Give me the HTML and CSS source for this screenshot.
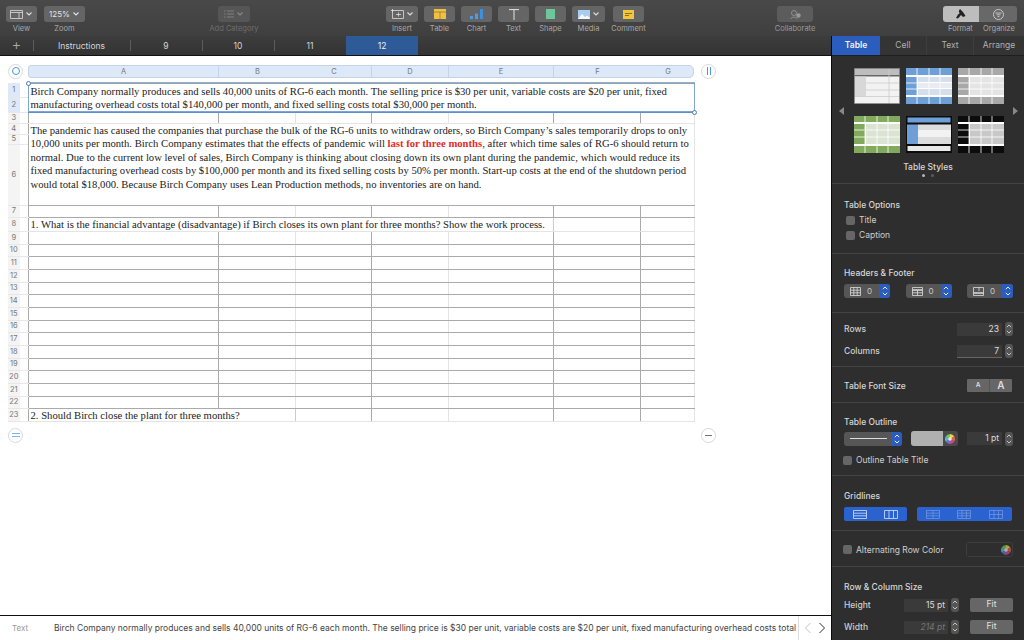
FILE: index.html
```html
<!DOCTYPE html>
<html lang="en">
<head>
    <meta charset="UTF-8">
    <title>Numbers</title>
    <link rel="stylesheet" href="styles.css">
</head>
<body>
<svg class="defs" width="0" height="0">
    <symbol id="chev" viewBox="0 0 8 8"><path d="M1.5 2.5 4 5l2.5-2.5" fill="none" stroke="currentColor" stroke-width="1.1"/></symbol>
    <symbol id="updown" viewBox="0 0 8 14"><path d="M1.8 5.2 4 3l2.2 2.2M1.8 8.8 4 11l2.2-2.2" fill="none" stroke="currentColor" stroke-width="1"/></symbol>
    <symbol id="wheel" viewBox="0 0 10 10">
        <path d="M5 5V0a5 5 0 0 1 4.3 2.500z" fill="#e6d84c"/>
        <path d="M5 5 9.300 2.500a5 5 0 0 1 0 5z" fill="#e0623f"/>
        <path d="M5 5 9.300 7.500A5 5 0 0 1 5 10z" fill="#c9479a"/>
        <path d="M5 5v5A5 5 0 0 1 .7 7.500z" fill="#6a6fd8"/>
        <path d="M5 5 .7 7.500a5 5 0 0 1 0-5z" fill="#53b9d9"/>
        <path d="M5 5 .7 2.500A5 5 0 0 1 5 0z" fill="#73c95f"/>
        <circle cx="5" cy="5" r="1.800" fill="#e8e8e8"/>
    </symbol>
</svg>

<!-- toolbar -->
<header class="toolbar">
    <div class="tool w31">
        <div class="btn"><svg class="ic" width="13" height="9" viewBox="0 0 13 9"><path d="M.5.5h12v8H.5zM.5 2.500h12M9 2.500v6" fill="none" stroke="#ddd" stroke-width=".8"/></svg><svg class="chev"><use href="#chev"/></svg></div>
        <span>View</span>
    </div>
    <div class="tool w41 ml7">
        <div class="btn zoomtxt">125%<svg class="chev"><use href="#chev"/></svg></div>
        <span>Zoom</span>
    </div>
    <div class="tool w32 ml133 off">
        <div class="btn"><svg class="ic" width="10" height="8" viewBox="0 0 10 8"><path d="M0 1h1.500M3 1h7M0 4h1.500M3 4h7M0 7h1.500M3 7h7" stroke="#8a8a8a" stroke-width=".8"/></svg><svg class="chev"><use href="#chev"/></svg></div>
        <span>Add Category</span>
    </div>
    <div class="tool w32 ml136">
        <div class="btn"><svg class="ic" width="13" height="10" viewBox="0 0 13 10"><path d="M1.500 1.500h11v8h-11zM5 5.500h5M7.500 3.500v4M1.500 0v3M0 1.500h3" fill="none" stroke="#ddd" stroke-width=".8"/></svg><svg class="chev"><use href="#chev"/></svg></div>
        <span>Insert</span>
    </div>
    <div class="tool w31 ml6">
        <div class="btn"><svg width="12" height="10" viewBox="0 0 12 10"><rect width="12" height="10" fill="#f0c040"/><path d="M0 3h12M6 3v7" stroke="#7a6a30" stroke-width=".6"/></svg></div>
        <span>Table</span>
    </div>
    <div class="tool w31 ml6">
        <div class="btn"><svg width="13" height="10" viewBox="0 0 13 10"><path d="M0 7h3v3H0zM5 4.500h3V10H5z" fill="#4d9be0"/><path d="M10 0h3v10h-3z" fill="#3f8fe0"/></svg></div>
        <span>Chart</span>
    </div>
    <div class="tool w31 ml6">
        <div class="btn"><svg width="10" height="11" viewBox="0 0 10 11"><path d="M0 .6h10M5 .6V11" stroke="#e4e4e4" stroke-width="1"/></svg></div>
        <span>Text</span>
    </div>
    <div class="tool w31 ml6">
        <div class="btn"><svg width="9" height="10" viewBox="0 0 9 10"><rect width="9" height="10" fill="#6cc79a"/></svg></div>
        <span>Shape</span>
    </div>
    <div class="tool w33 ml6">
        <div class="btn"><svg class="ic" width="12" height="9" viewBox="0 0 12 9"><rect width="12" height="9" fill="#a9cdf2"/><path d="M0 9 4 4l3 3 2-1.500L12 8v1z" fill="#f4f8fc"/></svg><svg class="chev"><use href="#chev"/></svg></div>
        <span>Media</span>
    </div>
    <div class="tool w31 ml8">
        <div class="btn"><svg width="11" height="9" viewBox="0 0 11 9"><rect width="11" height="9" fill="#f2c63a"/><path d="M2 3.500h7M2 5.500h4" stroke="#6e5a1c" stroke-width=".8"/></svg></div>
        <span>Comment</span>
    </div>
    <div class="tool w36 ml133 dim">
        <div class="btn"><svg width="11" height="9" viewBox="0 0 11 9"><circle cx="4" cy="3" r="2.500" fill="none" stroke="#999" stroke-width=".8"/><path d="M.8 9c.4-2.500 5.800-2.500 6.400 0" fill="none" stroke="#999" stroke-width=".8"/><circle cx="8.500" cy="5.500" r="2.200" fill="#999"/></svg></div>
        <span>Collaborate</span>
    </div>
    <div class="tool-seg">
        <div class="seg">
            <div class="seg-on"><svg width="10" height="10" viewBox="0 0 10 10"><path d="M4 0 7 3 9.500 7 7 8 5 6 2 9.500 0 9l2-3.500L3.500 4.500 2.800 2z" fill="#222"/></svg></div>
            <div class="seg-off"><svg width="11" height="11" viewBox="0 0 11 11"><circle cx="5.500" cy="5.500" r="5" fill="none" stroke="#ddd" stroke-width=".8"/><path d="M2.500 4h6M3.500 5.800h4M4.500 7.600h2" stroke="#ddd" stroke-width=".8"/></svg></div>
        </div>
        <div class="seg-labels"><span>Format</span><span>Organize</span></div>
    </div>
</header>

<div class="main">
    <div class="workspace">
        <nav class="sheets">
            <div class="add">+</div>
            <div class="sheet first">Instructions</div>
            <div class="sheet">9</div>
            <div class="sheet">10</div>
            <div class="sheet last">11</div>
            <div class="sheet active">12</div>
        </nav>

        <div class="canvas">
            <div class="col-row">
                <div class="round-btn"><i class="ring"></i></div>
                <div class="col-heads">
                    <div class="col-a">A</div>
                    <div class="col-bc"><span>B</span><span>C</span></div>
                    <div class="col-d">D</div>
                    <div class="col-e">E</div>
                    <div class="col-fg"><span>F</span><span>G</span></div>
                </div>
                <div class="round-btn pause"><i></i><i></i></div>
            </div>

            <table class="sheet-table">
                <colgroup>
                    <col class="c-num"><col class="c-a"><col class="c-b"><col class="c-c"><col class="c-d"><col class="c-e"><col class="c-f"><col class="c-g">
                </colgroup>
                <tr class="h14"><th class="sel">1</th><td class="merged selected" colspan="7" rowspan="2">
                    Birch Company normally produces and sells 40,000 units of RG-6 each month. The selling price is $30 per unit, variable costs are $20 per unit, fixed<br>
                    manufacturing overhead costs total $140,000 per month, and fixed selling costs total $30,000 per month.
                    <i class="dot d-start"></i><i class="dot d-end"></i>
                </td></tr>
                <tr class="h15"><th class="sel">2</th></tr>
                <tr class="h11 light-bottom"><th>3</th><td></td><td class="lt"></td><td></td><td class="lt"></td><td></td><td></td><td class="noright"></td></tr>
                <tr class="h11"><th>4</th><td class="merged para" colspan="7" rowspan="3">
                    The pandemic has caused the companies that purchase the bulk of the RG-6 units to withdraw orders, so Birch Company’s sales temporarily drops to only<br>
                    10,000 units per month. Birch Company estimates that the effects of pandemic will <b>last for three months</b>, after which time sales of RG-6 should return to<br>
                    normal. Due to the current low level of sales, Birch Company is thinking about closing down its own plant during the pandemic, which would reduce its<br>
                    fixed manufacturing overhead costs by $100,000 per month and its fixed selling costs by 50% per month. Start-up costs at the end of the shutdown period<br>
                    would total $18,000. Because Birch Company uses Lean Production methods, no inventories are on hand.
                </td></tr>
                <tr class="h10"><th>5</th></tr>
                <tr class="h61"><th>6</th></tr>
                <tr class="h12"><th>7</th><td></td><td class="lt"></td><td></td><td class="lt"></td><td></td><td></td><td class="noright"></td></tr>
                <tr class="h14 light-bottom"><th>8</th><td class="merged q" colspan="5">1. What is the financial advantage (disadvantage) if Birch closes its own plant for three months? Show the work process.</td><td></td><td class="noright"></td></tr>
                <tr class="h13"><th>9</th><td></td><td class="lt"></td><td></td><td class="lt"></td><td></td><td></td><td class="noright"></td></tr>
                <tr class="h12"><th>10</th><td></td><td class="lt"></td><td></td><td class="lt"></td><td></td><td></td><td class="noright"></td></tr>
                <tr class="h13"><th>11</th><td></td><td class="lt"></td><td></td><td class="lt"></td><td></td><td></td><td class="noright"></td></tr>
                <tr class="h13"><th>12</th><td></td><td class="lt"></td><td></td><td class="lt"></td><td></td><td></td><td class="noright"></td></tr>
                <tr class="h12"><th>13</th><td></td><td class="lt"></td><td></td><td class="lt"></td><td></td><td></td><td class="noright"></td></tr>
                <tr class="h13"><th>14</th><td></td><td class="lt"></td><td></td><td class="lt"></td><td></td><td></td><td class="noright"></td></tr>
                <tr class="h13"><th>15</th><td></td><td class="lt"></td><td></td><td class="lt"></td><td></td><td></td><td class="noright"></td></tr>
                <tr class="h12"><th>16</th><td></td><td class="lt"></td><td></td><td class="lt"></td><td></td><td></td><td class="noright"></td></tr>
                <tr class="h13"><th>17</th><td></td><td class="lt"></td><td></td><td class="lt"></td><td></td><td></td><td class="noright"></td></tr>
                <tr class="h13"><th>18</th><td></td><td class="lt"></td><td></td><td class="lt"></td><td></td><td></td><td class="noright"></td></tr>
                <tr class="h12"><th>19</th><td></td><td class="lt"></td><td></td><td class="lt"></td><td></td><td></td><td class="noright"></td></tr>
                <tr class="h13"><th>20</th><td></td><td class="lt"></td><td></td><td class="lt"></td><td></td><td></td><td class="noright"></td></tr>
                <tr class="h13"><th>21</th><td></td><td class="lt"></td><td></td><td class="lt"></td><td></td><td></td><td class="noright"></td></tr>
                <tr class="h12"><th>22</th><td></td><td class="lt"></td><td></td><td class="lt"></td><td></td><td></td><td class="noright"></td></tr>
                <tr class="h13 light-bottom"><th>23</th><td class="merged q" colspan="2">2. Should Birch close the plant for three months?</td><td></td><td class="lt"></td><td></td><td></td><td class="noright"></td></tr>
            </table>

            <div class="add-row">
                <div class="round-btn eq"><i></i><i></i></div>
                <div class="round-btn minus"><i></i></div>
            </div>
        </div>

        <footer class="textbar">
            <span class="textbar-label">Text</span>
            <span class="textbar-value">Birch Company normally produces and sells 40,000 units of RG-6 each month. The selling price is $30 per unit, variable costs are $20 per unit, fixed manufacturing overhead costs total</span>
            <div class="textbar-nav">
                <svg width="8" height="12" viewBox="0 0 8 12"><path d="M6.500 1 1.500 6l5 5" fill="none" stroke="#c4c4c4"/></svg>
                <svg width="8" height="12" viewBox="0 0 8 12"><path d="M1.500 1l5 5-5 5" fill="none" stroke="#333"/></svg>
            </div>
        </footer>
    </div>

    <aside class="sidebar">
        <div class="side-tabs">
            <div class="side-tab active">Table</div>
            <div class="side-tab">Cell</div>
            <div class="side-tab">Text</div>
            <div class="side-tab">Arrange</div>
        </div>

        <section class="sec sec-styles">
            <div class="thumbs">
                <span class="arrow left"></span>
                <div class="thumb-grid">
                    <svg width="46" height="36" viewBox="0 0 46 36"><rect width="46" height="36" fill="#f2f2f2"/><rect width="46" height="7" fill="#bdbdbd"/><rect y="7" width="46" height="1.500" fill="#666"/><rect y="8.500" width="12" height="20" fill="#d8d8d8"/><path d="M12 15h34M12 22h34M35 0v36M0 28.500h46" stroke="#ccc" stroke-width=".8"/><rect x=".4" y=".4" width="45.200" height="35.200" fill="none" stroke="#777" stroke-width=".8"/></svg>
                    <svg width="46" height="36" viewBox="0 0 46 36"><rect width="46" height="36" fill="#fff"/><path d="M0 0h46v7H0zM0 29h46v7H0z" fill="#6e9fd6"/><path d="M0 9h11v18H0z" fill="#6e9fd6"/><path d="M12 9h34v5H12zM12 21h34v6H12z" fill="#d5dfec"/><path d="M12 15h34v5H12z" fill="#e8ecf2"/><path d="M11 0v36M23 0v36M34 0v36M0 8h46M0 15h12M0 21h12M0 28h46" stroke="#fff" stroke-width=".8"/></svg>
                    <svg width="46" height="36" viewBox="0 0 46 36"><rect width="46" height="36" fill="#fff"/><path d="M0 0h46v7H0zM0 29h46v7H0z" fill="#a8a8a8"/><path d="M0 9h11v18H0z" fill="#a8a8a8"/><path d="M12 9h34v18H12z" fill="#e4e4e4"/><path d="M11 0v36M23 0v36M34 0v36M0 8h46M0 15h46M0 21h46M0 28h46" stroke="#fff" stroke-width=".8"/></svg>
                    <svg width="46" height="37" viewBox="0 0 46 37"><rect width="46" height="37" fill="#fff"/><path d="M0 0h46v6H0zM0 30h46v7H0z" fill="#82aa5c"/><path d="M0 8h11v20H0z" fill="#82aa5c"/><path d="M12 8h34v20H12z" fill="#dbe3d2"/><path d="M11 0v37M23 0v37M34 0v37M0 7h46M0 14h46M0 21h46M0 29h46" stroke="#fff" stroke-width=".8"/></svg>
                    <svg width="46" height="37" viewBox="0 0 46 37"><rect width="46" height="37" fill="#0c0c0c"/><rect x="1.500" y="1.500" width="43" height="5" fill="#6e9fd6"/><path d="M1 8.500h11V28H1z" fill="#6e9fd6"/><path d="M12 8.500h33V14H12zM12 21h33v7H12z" fill="#dcdcdc"/><path d="M12 14h33v7H12z" fill="#f2f2f2"/><rect x="1.500" y="30" width="43" height="5" fill="#e8e8e8"/></svg>
                    <svg width="46" height="37" viewBox="0 0 46 37"><rect width="46" height="37" fill="#fff"/><path d="M0 0h46v6H0zM0 30h46v7H0z" fill="#0c0c0c"/><path d="M0 8h11v20H0z" fill="#0c0c0c"/><path d="M12 8h34v20H12z" fill="#c8c8c8"/><path d="M11 0v37M23 0v37M34 0v37M0 7h46M0 14h46M0 21h46M0 29h46" stroke="#fff" stroke-width=".8"/></svg>
                </div>
                <span class="arrow right"></span>
            </div>
            <div class="styles-title">Table Styles</div>
            <div class="page-dots"><i class="on"></i><i></i></div>
        </section>

        <section class="sec sec-options">
            <h3>Table Options</h3>
            <label class="check ind"><i class="box"></i>Title</label>
            <label class="check ind"><i class="box"></i>Caption</label>
        </section>

        <section class="sec sec-headers">
            <h3>Headers &amp; Footer</h3>
            <div class="row">
                <div class="hf">
                    <svg width="11" height="9" viewBox="0 0 11 9"><path d="M.5.5h10v8H.5zM.5 3.200h10M.5 5.800h10M3.800.5v8M7.200.5v8" fill="none" stroke="#ddd" stroke-width=".8"/></svg>
                    <span>0</span><b><svg><use href="#updown"/></svg></b>
                </div>
                <div class="hf">
                    <svg width="11" height="9" viewBox="0 0 11 9"><path d="M.5.5h10v8H.5z" fill="none" stroke="#ddd" stroke-width=".8"/><path d="M.5 3h10" stroke="#ddd" stroke-width="1.400"/><path d="M.5 5.800h10M5.500 3v5.500" stroke="#ddd" stroke-width=".8"/></svg>
                    <span>0</span><b><svg><use href="#updown"/></svg></b>
                </div>
                <div class="hf">
                    <svg width="11" height="9" viewBox="0 0 11 9"><path d="M.5.5h10v8H.5z" fill="none" stroke="#ddd" stroke-width=".8"/><path d="M.5 6h10" stroke="#ddd" stroke-width="1.400"/><path d="M6 .5V4" stroke="#ddd" stroke-width=".8"/></svg>
                    <span>0</span><b><svg><use href="#updown"/></svg></b>
                </div>
            </div>
        </section>

        <section class="sec sec-rows">
            <div class="row field"><span>Rows</span><div class="num-wrap"><div class="num">23</div><div class="stepper"><svg><use href="#updown"/></svg></div></div></div>
            <div class="row field gap8"><span>Columns</span><div class="num-wrap"><div class="num underline">7</div><div class="stepper"><svg><use href="#updown"/></svg></div></div></div>
        </section>

        <section class="sec sec-font">
            <div class="row"><h3>Table Font Size</h3>
                <div class="font-btns"><span class="small">A</span><span class="big">A</span></div>
            </div>
        </section>

        <section class="sec sec-outline">
            <h3>Table Outline</h3>
            <div class="row outline-row">
                <div class="line-pick"><i></i><b><svg><use href="#updown"/></svg></b></div>
                <div class="color-pick"><i class="swatch"></i><svg class="wheel"><use href="#wheel"/></svg></div>
                <div class="num-wrap"><div class="num short">1 pt</div><div class="stepper"><svg><use href="#updown"/></svg></div></div>
            </div>
            <label class="check"><i class="box"></i>Outline Table Title</label>
        </section>

        <section class="sec sec-grid">
            <h3>Gridlines</h3>
            <div class="row grid-row">
                <div class="grid-btns first">
                    <svg width="14" height="9" viewBox="0 0 14 9"><path d="M.5.5h13v8H.5zM.5 3.200h13M.5 5.800h13" fill="none" stroke="#d5e2fa" stroke-width=".8"/></svg>
                    <svg width="14" height="9" viewBox="0 0 14 9"><path d="M.5.5h13v8H.5zM5 .5v8M9.500.5v8" fill="none" stroke="#d5e2fa" stroke-width=".8"/></svg>
                </div>
                <div class="grid-btns second">
                    <svg width="14" height="9" viewBox="0 0 14 9"><path d="M.5.5h13v8H.5zM.5 3.200h13M.5 5.800h13M7 .5v8" fill="none" stroke="#6f95dd" stroke-width=".8"/></svg>
                    <svg width="14" height="9" viewBox="0 0 14 9"><path d="M.5.5h13v8H.5zM.5 3.200h13M.5 5.800h13M5 .5v8M9.500.5v8" fill="none" stroke="#6f95dd" stroke-width=".8"/></svg>
                    <svg width="14" height="9" viewBox="0 0 14 9"><path d="M.5.5h13v8H.5zM.5 4.500h13M5 .5v8M9.500.5v8" fill="none" stroke="#6f95dd" stroke-width=".8"/></svg>
                </div>
            </div>
        </section>

        <section class="sec sec-alt">
            <div class="row">
                <label class="check"><i class="box"></i>Alternating Row Color</label>
                <div class="color-pick off"><i class="swatch"></i><svg class="wheel"><use href="#wheel"/></svg></div>
            </div>
        </section>

        <section class="sec sec-size">
            <h3>Row &amp; Column Size</h3>
            <div class="row field size-row"><span>Height</span>
                <div class="size-ctl"><div class="num mid">15 pt</div><div class="stepper"><svg><use href="#updown"/></svg></div><div class="fit">Fit</div></div>
            </div>
            <div class="row field size-row"><span>Width</span>
                <div class="size-ctl"><div class="num mid faded">214 pt</div><div class="stepper"><svg><use href="#updown"/></svg></div><div class="fit">Fit</div></div>
            </div>
        </section>
    </aside>
</div>
</body>
</html>
```

FILE: styles.css
```css
/* -------- Page -------- */
* { box-sizing: border-box; }
html, body { margin: 0; height: 100%; }
body {
    width: 1024px;
    height: 640px;
    overflow: hidden;
    display: flex;
    flex-direction: column;
    font-family: Inter, "Noto Sans", sans-serif;
    background: #fff;
}
.defs { position: absolute; }
h3 { margin: 0; font-size: 8.5px; line-height: 12px; font-weight: 500; color: #d6d6d6; }

/* -------- Toolbar -------- */
.toolbar {
    height: 36px;
    flex: none;
    display: flex;
    padding: 6px 0 0 6px;
    background: linear-gradient(#494949, #3f3f3f);
}
.tool { display: flex; flex-direction: column; align-items: center; }
.tool > span, .seg-labels span {
    margin-top: 2px;
    font-size: 7.5px;
    line-height: 10px;
    color: #a8a8a8;
    white-space: nowrap;
}
.btn {
    width: 100%;
    height: 16px;
    display: flex;
    align-items: center;
    justify-content: center;
    gap: 2px;
    border-radius: 3px;
    background: #656565;
    color: #ddd;
}
.chev { width: 8px; height: 8px; }
.zoomtxt { font-size: 8px; color: #e2e2e2; }
.off .btn { background: #565656; color: #8a8a8a; }
.off > span { color: #6e6e6e; }
.dim .btn { background: #5c5c5c; }
.dim > span { color: #999; }
.w31 { width: 31px; }
.w32 { width: 32px; }
.w33 { width: 33px; }
.w36 { width: 36px; }
.w41 { width: 41px; }
.ml6 { margin-left: 6px; }
.ml7 { margin-left: 7px; }
.ml8 { margin-left: 8px; }
.ml133 { margin-left: 133px; }
.ml136 { margin-left: 136px; }
.tool-seg { width: 74px; margin-left: 130px; }
.seg { height: 16px; display: flex; border-radius: 3px; overflow: hidden; }
.seg-on, .seg-off { display: flex; align-items: center; justify-content: center; }
.seg-on { width: 36px; background: #bdbdbd; }
.seg-off { width: 38px; background: #686868; }
.seg-labels { display: flex; justify-content: space-between; padding: 0 2px 0 5px; }

/* -------- Sheet tabs -------- */
.main { flex: 1; display: flex; min-height: 0; }
.workspace { width: 831px; display: flex; flex-direction: column; }
.sheets {
    height: 20px;
    display: flex;
    align-items: stretch;
    background: linear-gradient(#3d3d3d, #333);
    border-bottom: 1px solid #111;
    font-size: 8.500px;
    color: #d4d4d4;
}
.add { width: 33px; text-align: center; font-size: 15px; font-weight: 300; line-height: 18px; color: #aaa; }
.sheet { width: 72px; display: flex; align-items: center; justify-content: center; position: relative; }
.sheet.first { width: 97px; }
.sheet::before { content: ""; position: absolute; left: 0; top: 4px; height: 11px; width: 1px; background: #5c5c5c; }
.sheet.active { background: #2f5a98; color: #eaf0f8; }
.sheet.active::before { display: none; }

/* -------- Canvas and table -------- */
.canvas { flex: 1; padding: 6px 0 0 8px; background: #fff; }
.col-row { height: 18px; display: flex; align-items: center; }
.round-btn {
    width: 15px;
    height: 15px;
    flex: none;
    display: flex;
    align-items: center;
    justify-content: center;
    gap: 2px;
    border: 1px solid #d8d8d8;
    border-radius: 50%;
    background: #fff;
}
.ring { width: 8px; height: 8px; border: 1px solid #4b93e6; border-radius: 50%; }
.pause { margin-left: 7px; }
.pause i { width: 1px; height: 8px; background: #4b93e6; }
.col-heads {
    width: 666px;
    height: 13px;
    margin-left: 5px;
    display: grid;
    grid-template-columns: 190px 153px 77px 105px 141px;
    background: #dde9f9;
    border: 1px solid #c5d3e6;
    border-radius: 3px 5px 5px 3px;
    font-size: 7.500px;
    line-height: 11px;
    color: #777;
    text-align: center;
}
.col-heads > div { border-right: 1px solid #c5d3e6; }
.col-heads > div:last-child { border-right: 0; }
.col-bc { display: grid; grid-template-columns: 77px 76px; }
.col-fg { display: grid; grid-template-columns: 87px 54px; }

.sheet-table {
    margin-top: 2px;
    table-layout: fixed;
    width: 687px;
    border-collapse: collapse;
    font-family: "Liberation Serif", serif;
    font-size: 10.670px;
    color: #222;
}
.c-num { width: 20px; }
.c-a { width: 190px; }
.c-b { width: 77px; }
.c-c { width: 76px; }
.c-d { width: 77px; }
.c-e { width: 105px; }
.c-f { width: 87px; }
.c-g { width: 54px; }
.h10 { height: 10px; }
.h11 { height: 11px; }
.h12 { height: 12px; }
.h13 { height: 13px; }
.h14 { height: 14px; }
.h15 { height: 15px; }
.h61 { height: 61px; }
.sheet-table th {
    padding: 0 8px 0 0;
    font-family: Inter, sans-serif;
    font-size: 7.500px;
    font-weight: 400;
    line-height: 8px;
    color: #777;
    text-align: center;
    background: linear-gradient(to right, #f4f4f4 12px, #fff 12px);
    border: 0;
    border-bottom: 1px solid #e8e8e8;
}
.sheet-table th.sel { background: linear-gradient(to right, #dde9f9 12px, #fff 12px); }
.sheet-table td {
    padding: 0;
    border: 1px solid #aaa;
    line-height: 13.400px;
    white-space: nowrap;
}
.sheet-table td.lt { border-right-color: #e4e4e4; }
.sheet-table td.lt + td { border-left-color: #e4e4e4; }
.sheet-table td.noright { border-right-color: #e4e4e4; }
.sheet-table .light-bottom td { border-bottom-color: #e4e4e4; }
.sheet-table td.merged { padding-left: 2px; vertical-align: top; }
.sheet-table td.q { line-height: 12px; border-right-color: #ccc; }
.sheet-table td.para { line-height: 13.500px; border-top-color: #e4e4e4; border-right-color: #e4e4e4; }
.sheet-table td.selected {
    position: relative;
    padding-top: 1px;
    border: 1px solid #5c8fd0;
    border-top: 2px solid #aaa;
    outline: 1px solid #7fa5d8;
    outline-offset: -1px;
}
.sheet-table b { color: #e32a2a; }
.dot {
    position: absolute;
    width: 5px;
    height: 5px;
    border: 1px solid #4a79bd;
    border-radius: 50%;
    background: #fff;
}
.d-start { left: -3px; top: -3px; }
.d-end { right: -3px; bottom: -3px; }
.add-row { width: 708px; margin-top: 6px; display: flex; justify-content: space-between; }
.eq { flex-direction: column; gap: 2px; }
.eq i { width: 8px; height: 1px; background: #7fb6ee; }
.minus i { width: 7px; height: 1px; background: #777; }

/* -------- Bottom text bar -------- */
.textbar {
    height: 25px;
    display: flex;
    align-items: center;
    border-top: 1px solid #111;
    background: #fff;
    font-size: 8.500px;
    color: #444;
    white-space: nowrap;
}
.textbar-label { width: 54px; padding-left: 12px; color: #999; font-size: 8px; }
.textbar-value { width: 744px; overflow: hidden; }
.textbar-nav {
    flex: 1;
    height: 100%;
    display: flex;
    align-items: center;
    justify-content: space-around;
    padding: 0 2px;
    border-left: 1px solid #ddd;
}

/* -------- Sidebar -------- */
.sidebar {
    width: 193px;
    flex: none;
    background: #2e2e2e;
    border-left: 1px solid #0a0a0a;
    color: #d2d2d2;
    font-size: 8.500px;
}
.side-tabs { height: 20px; display: flex; border-bottom: 1px solid #1e1e1e; background: #343434; }
.side-tab {
    width: 47px;
    display: flex;
    align-items: center;
    justify-content: center;
    padding-bottom: 1px;
    border-right: 1px solid #3e3e3e;
    color: #b0b0b0;
    font-size: 8.500px;
}
.side-tab.active { width: 48px; background: #2a5dbd; color: #f4f4f4; font-weight: 600; border: 0; }
.side-tab:last-child { flex: 1; border-right: 0; }
.sec { padding: 0 11px 0 12px; border-bottom: 1px solid #444; }
.row { display: flex; justify-content: space-between; align-items: center; }

.sec-styles { height: 128px; padding: 12px 0 0; }
.thumbs { display: flex; align-items: center; justify-content: space-between; padding: 0 6px 0 7px; }
.thumb-grid { display: grid; grid-template-columns: repeat(3, 46px); gap: 12px 6px; }
.thumb-grid svg { display: block; }
.arrow { width: 0; height: 0; border-top: 4px solid transparent; border-bottom: 4px solid transparent; }
.arrow.left { border-right: 5px solid #888; }
.arrow.right { border-left: 5px solid #888; }
.styles-title { margin-top: 8px; text-align: center; font-size: 8.500px; font-weight: 500; line-height: 12px; color: #d8d8d8; }
.page-dots { display: flex; justify-content: center; gap: 6px; margin-top: 1px; }
.page-dots i { width: 3px; height: 3px; border-radius: 50%; background: #5c5c5c; }
.page-dots i.on { background: #b4b4b4; }

.check { display: flex; align-items: center; gap: 4px; font-size: 8.500px; line-height: 12px; color: #cfcfcf; white-space: nowrap; }
.check.ind { margin-left: 2px; margin-top: 3px; }
.box { width: 9px; height: 9px; border-radius: 2px; background: #666; }
.sec-options { height: 70px; padding-top: 15px; }
.sec-options .check:first-of-type { margin-top: 3px; }

.sec-headers { height: 59px; padding-top: 13px; }
.sec-headers .row { margin-top: 5px; }
.hf {
    width: 46px;
    height: 14px;
    display: flex;
    align-items: center;
    padding-left: 6px;
    border-radius: 3px;
    overflow: hidden;
    background: #565656;
    color: #c8c8c8;
    font-size: 8px;
}
.hf span { margin-left: 6px; }
.hf b, .line-pick b {
    margin-left: auto;
    width: 11px;
    height: 100%;
    display: flex;
    align-items: center;
    justify-content: center;
    background: #2a5dbd;
    color: #e8eefa;
}
.hf b svg, .line-pick b svg, .stepper svg { width: 8px; height: 14px; display: block; }

.sec-rows { height: 54px; padding-top: 9px; }
.field > span { font-size: 8.500px; font-weight: 500; color: #cfcfcf; }
.gap8 { margin-top: 8px; }
.num-wrap { display: flex; align-items: center; gap: 3px; }
.num {
    width: 45px;
    height: 13px;
    padding-right: 3px;
    text-align: right;
    background: #3a3a3a;
    font-size: 8.500px;
    line-height: 13px;
    color: #dedede;
}
.num.underline { border-bottom: 1px solid #666; }
.num.short { width: 35px; }
.num.mid { width: 44px; }
.num.faded { color: #777; font-style: italic; }
.stepper {
    width: 8px;
    height: 14px;
    border-radius: 3px;
    background: #555;
    color: #c4c4c4;
}

.sec-font { height: 36px; padding: 12px 12px 0 12px; }
.font-btns { width: 45px; height: 13px; display: flex; background: #666; color: #ddd; border-radius: 1px; }
.font-btns span { flex: 1; text-align: center; line-height: 13px; font-weight: 600; }
.font-btns .small { font-size: 6.500px; border-right: 1px solid #555; }
.font-btns .big { font-size: 10px; }

.sec-outline { height: 73px; padding-top: 13px; }
.outline-row { margin-top: 3px; }
.line-pick {
    width: 58px;
    height: 14px;
    display: flex;
    align-items: center;
    padding-left: 6px;
    border-radius: 3px;
    overflow: hidden;
    background: #565656;
}
.line-pick i { width: 37px; height: 1px; background: #ddd; }
.color-pick {
    width: 47px;
    height: 15px;
    display: flex;
    align-items: center;
    border-radius: 3px;
    overflow: hidden;
    background: #4a4a4a;
}
.swatch { width: 32px; height: 100%; background: #b0b0b0; }
.wheel { width: 10px; height: 10px; margin-left: 2px; }
.color-pick.off { border: 1px solid #3e3e3e; background: #2e2e2e; }
.color-pick.off .swatch { background: #2e2e2e; }
.color-pick.off .wheel { opacity: .7; }
.sec-outline .check { margin-top: 8px; margin-left: -1px; }

.sec-grid { height: 55px; padding-top: 14px; }
.grid-row { margin-top: 5px; justify-content: flex-start; gap: 10px; }
.grid-btns {
    height: 14px;
    display: flex;
    align-items: center;
    justify-content: space-around;
    border-radius: 2px;
    background: #2a63cf;
}
.grid-btns.first { width: 63px; }
.grid-btns.second { width: 95px; }

.sec-alt { height: 36px; padding-top: 11px; }
.sec-alt .check { margin-left: -1px; }

.sec-size { height: 73px; padding-top: 14px; border-bottom: 0; }
.size-row { margin-top: 7px; }
.size-row + .size-row { margin-top: 8px; }
.size-row:first-of-type { margin-top: 5px; }
.size-ctl { display: flex; align-items: center; gap: 3px; }
.fit {
    width: 43px;
    height: 14px;
    margin-left: 8px;
    border-radius: 2px;
    background: #666;
    text-align: center;
    font-size: 8.500px;
    line-height: 13px;
    color: #e0e0e0;
}
```
